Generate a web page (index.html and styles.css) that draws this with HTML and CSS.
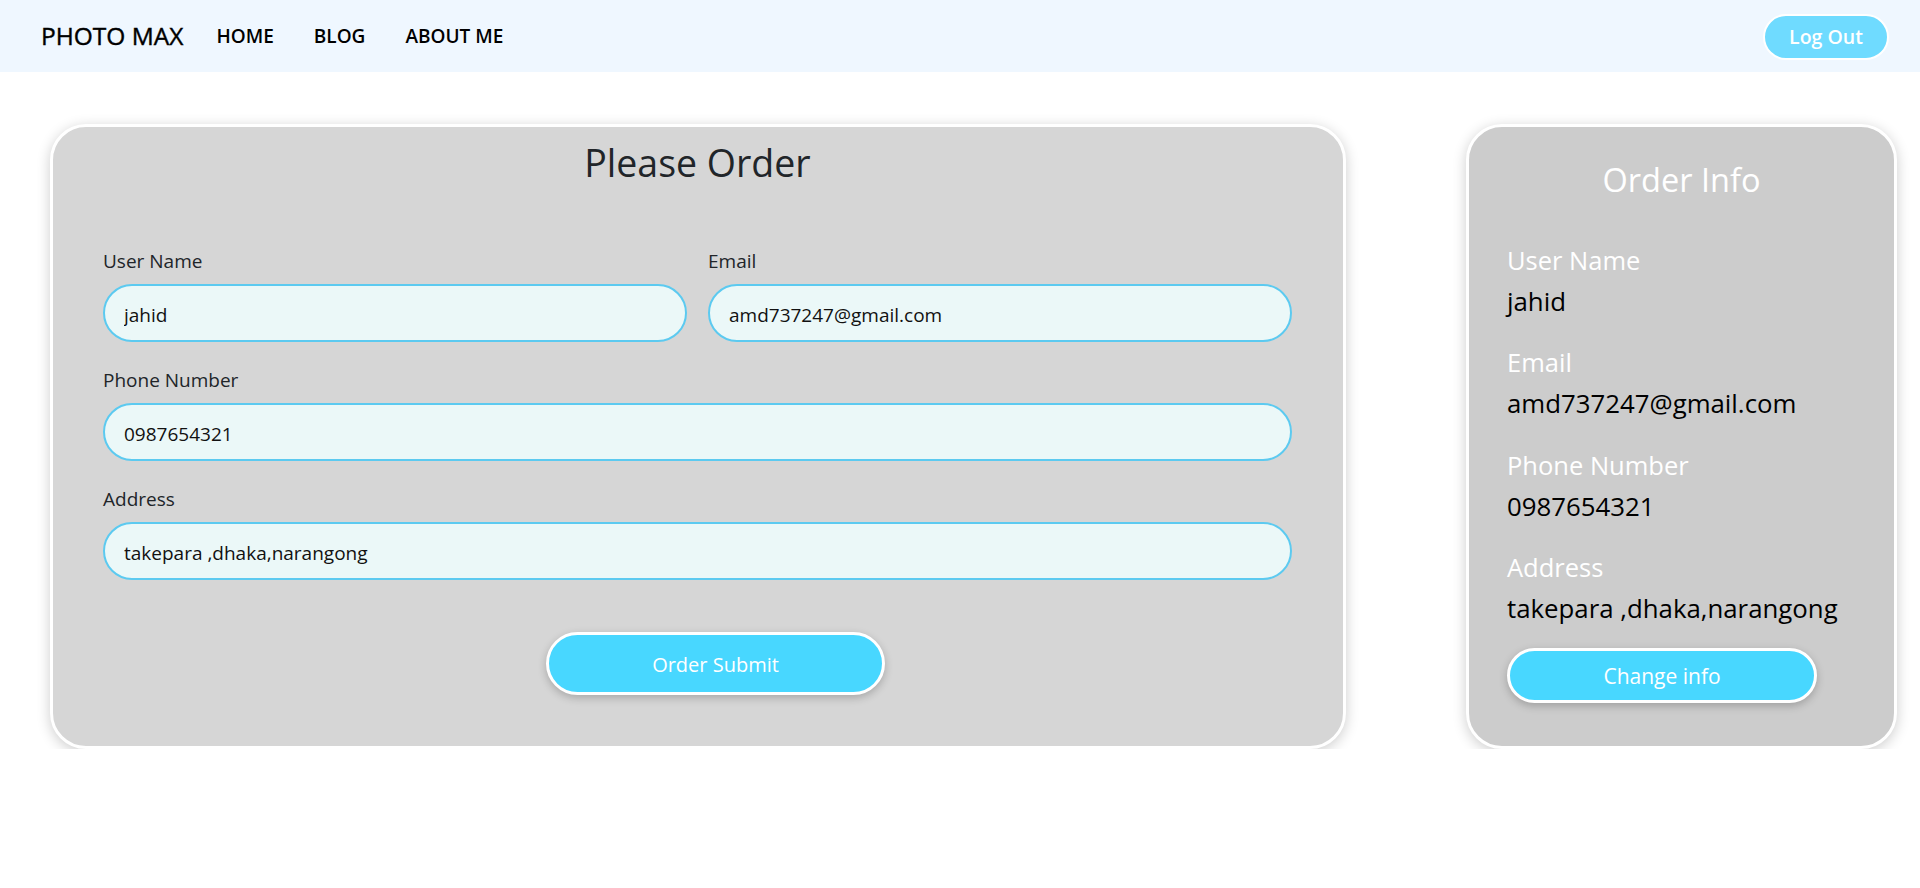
FILE: index.html
```html
<!DOCTYPE html>
<html lang="en">
<head>
<meta charset="utf-8">
<title>Photo Max - Order</title>
<link rel="stylesheet" href="styles.css">
</head>
<body>
<nav class="navbar">
  <a class="brand" href="#">PHOTO MAX</a>
  <ul class="nav-links">
    <li><a href="#">HOME</a></li>
    <li><a href="#">BLOG</a></li>
    <li><a href="#">ABOUT ME</a></li>
  </ul>
  <button class="logout" type="button">Log Out</button>
</nav>

<main class="page">
  <section class="order-card">
    <h2 class="order-title">Please Order</h2>
    <form class="order-form">
      <div class="form-row">
        <div class="field">
          <label class="field-label">User Name</label>
          <input class="field-input" type="text" value="jahid">
        </div>
        <div class="field">
          <label class="field-label">Email</label>
          <input class="field-input" type="text" value="amd737247@gmail.com">
        </div>
      </div>
      <div class="field">
        <label class="field-label">Phone Number</label>
        <input class="field-input" type="text" value="0987654321">
      </div>
      <div class="field">
        <label class="field-label">Address</label>
        <input class="field-input" type="text" value="takepara ,dhaka,narangong">
      </div>
      <div class="submit-wrap">
        <button class="pill-btn submit-btn" type="button">Order Submit</button>
      </div>
    </form>
  </section>

  <aside class="info-card">
    <h3 class="info-title">Order Info</h3>
    <dl class="info-list">
      <dt class="info-label">User Name</dt>
      <dd class="info-value">jahid</dd>
      <dt class="info-label">Email</dt>
      <dd class="info-value">amd737247@gmail.com</dd>
      <dt class="info-label">Phone Number</dt>
      <dd class="info-value">0987654321</dd>
      <dt class="info-label">Address</dt>
      <dd class="info-value">takepara ,dhaka,narangong</dd>
    </dl>
    <button class="pill-btn change-btn" type="button">Change info</button>
  </aside>
</main>
</body>
</html>
```

FILE: styles.css
```css
* {
  box-sizing: border-box;
}

body {
  margin: 0;
  background: #ffffff;
  font-family: "Segoe UI", "Open Sans", "Noto Sans", sans-serif;
  color: #212529;
}

/* ---------- navbar ---------- */
.navbar {
  height: 72px;
  background: #eff7ff;
  display: flex;
  align-items: center;
  padding: 0 31px 0 41px;
}

.brand {
  font-size: 24.5px;
  font-weight: 400;
  -webkit-text-stroke: 0.4px #000;
  color: #000;
  text-decoration: none;
  line-height: 1;
  margin-top: 1px;
}

.nav-links {
  list-style: none;
  margin: 0 0 0 33px;
  padding: 0;
  display: flex;
  gap: 40px;
}

.nav-links a {
  font-size: 19px;
  font-weight: 600;
  color: #000;
  text-decoration: none;
}

.logout {
  margin-left: auto;
  width: 126px;
  height: 46px;
  border: 2px solid #ffffff;
  border-radius: 23px;
  background: #6fdbff;
  color: #ffffff;
  font-family: inherit;
  font-size: 19.5px;
  font-weight: 600;
  padding: 0;
  margin-top: 1px;
}

/* ---------- layout ---------- */
.page {
  display: grid;
  grid-template-columns: 1296px 431px;
  column-gap: 120px;
  padding-left: 50px;
  margin-top: 52px;
}

.order-card,
.info-card {
  border: 3px solid #ffffff;
  border-radius: 36px;
  box-shadow: 0 3px 14px rgba(0, 0, 0, 0.2);
}

/* ---------- order card ---------- */
.order-card {
  background: #d6d6d6;
  padding: 13px 51px 51px 50px;
}

.order-title {
  margin: 0;
  text-align: center;
  font-size: 37.5px;
  font-weight: 400;
  line-height: 45px;
  color: #212529;
}

.order-form {
  margin-top: 61px;
}

.form-row {
  display: grid;
  grid-template-columns: 1fr 1fr;
  column-gap: 21px;
}

.field {
  margin-bottom: 23px;
}

.field-label {
  display: block;
  font-size: 19px;
  line-height: 30px;
  margin-bottom: 8px;
  color: #212529;
}

.field-input {
  display: block;
  width: 100%;
  height: 58px;
  border: 2px solid #5ccaf0;
  border-radius: 29px;
  background: #ebf8f8;
  padding: 3px 19px 0 19px;
  font-family: inherit;
  font-size: 19px;
  color: #111;
  outline: none;
}

.submit-wrap {
  display: flex;
  justify-content: center;
  padding-top: 29px;
}

.pill-btn {
  background: #48d7ff;
  border: 3px solid #ffffff;
  color: #ffffff;
  font-family: inherit;
  font-size: 20px;
  padding: 0;
  box-shadow: 0 3px 9px rgba(0, 0, 0, 0.22);
}

.submit-btn {
  width: 339px;
  height: 63px;
  border-radius: 32px;
  margin-left: 36px;
  padding-top: 2px;
}

/* ---------- info card ---------- */
.info-card {
  background: #cccccc;
  padding: 33px 38px 41px 38px;
  color: #ffffff;
}

.info-title {
  margin: 0;
  text-align: center;
  font-size: 32.5px;
  font-weight: 400;
  line-height: 39px;
  color: #ffffff;
}

.info-list {
  margin: 40.5px 0 0 0;
}

.info-label {
  font-size: 25.5px;
  line-height: 41px;
  color: #ffffff;
}

.info-value {
  margin: 0 0 20.5px 0;
  font-size: 25.8px;
  line-height: 41px;
  color: #000000;
}

.info-value:last-child {
  margin-bottom: 0;
}

.change-btn {
  margin-top: 19px;
  width: 310px;
  height: 55px;
  border-radius: 28px;
  font-size: 21px;
  padding-top: 1px;
}
```
